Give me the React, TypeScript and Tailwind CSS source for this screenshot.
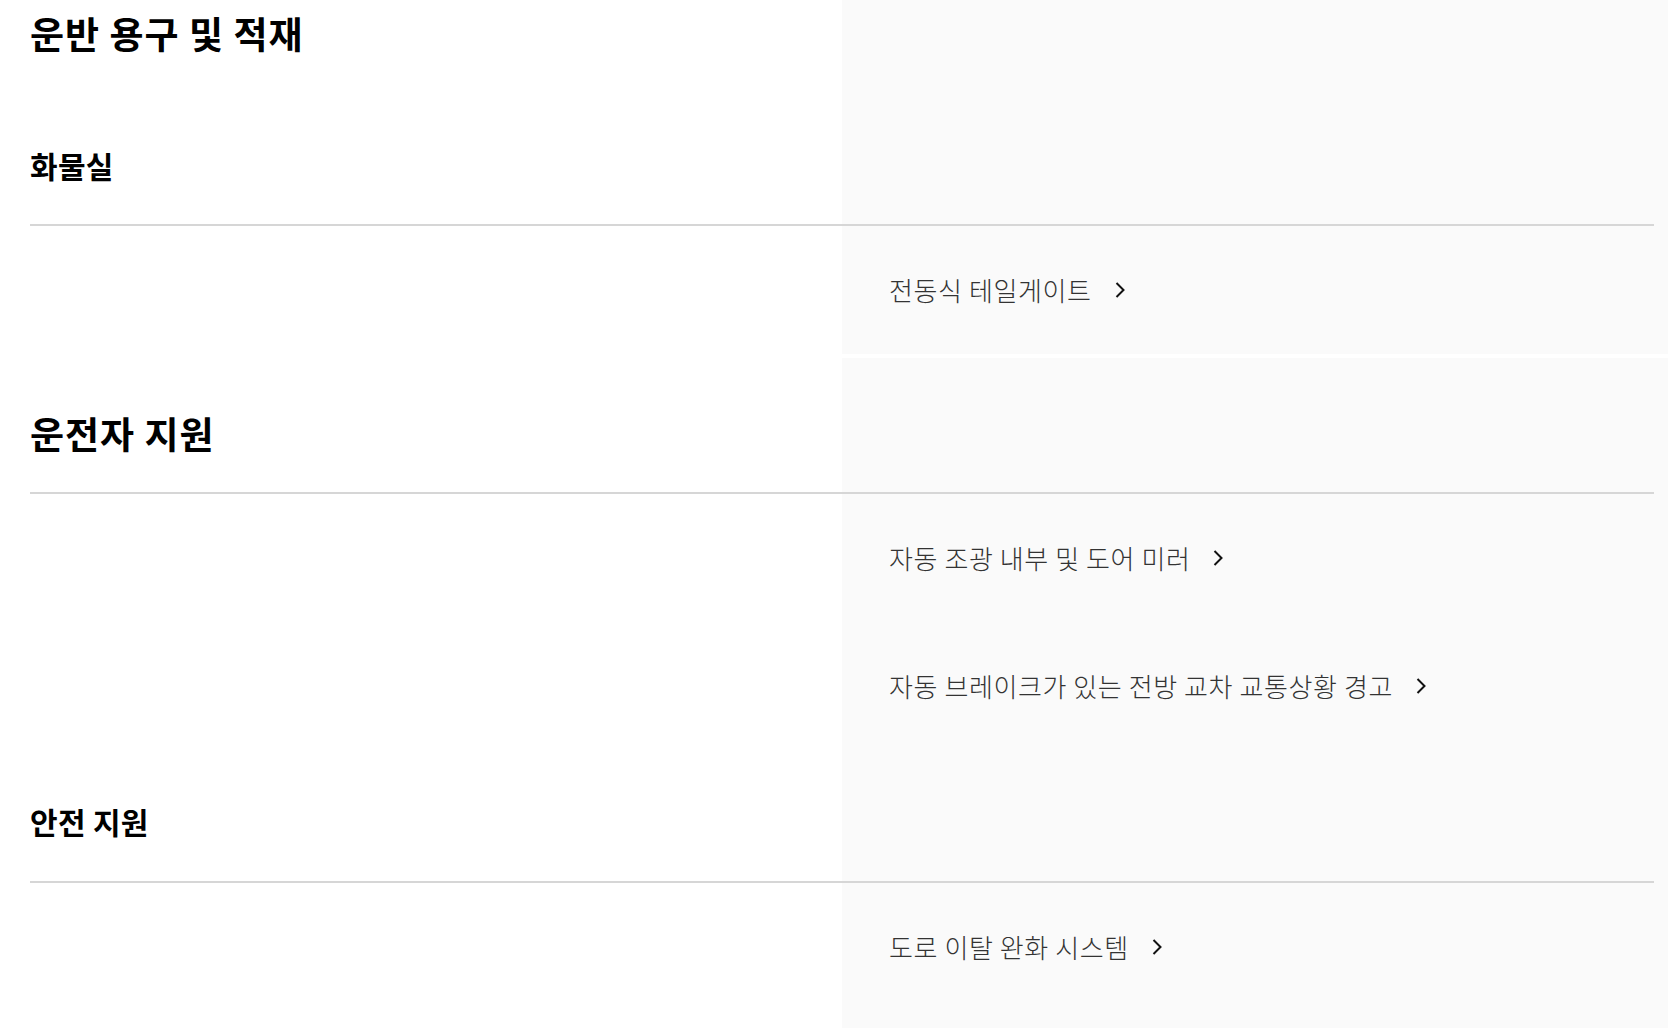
import React from "react";

type Group = {
  label?: string;
  items: string[];
};

type Section = {
  title: string;
  groups: Group[];
};

const sections: Section[] = [
  {
    title: "운반 용구 및 적재",
    groups: [{ label: "화물실", items: ["전동식 테일게이트"] }],
  },
  {
    title: "운전자 지원",
    groups: [
      {
        items: [
          "자동 조광 내부 및 도어 미러",
          "자동 브레이크가 있는 전방 교차 교통상황 경고",
        ],
      },
      { label: "안전 지원", items: ["도로 이탈 완화 시스템"] },
    ],
  },
];

const font = { fontFamily: '"Noto Sans CJK KR", "Noto Sans", sans-serif' };

const Chevron = () => (
  <svg width="15" height="18" viewBox="0 0 15 18" fill="none" className="ml-[21px] shrink-0">
    <polyline points="3.5,2 10.5,9 3.5,16" stroke="#111" strokeWidth="2" strokeLinecap="butt" strokeLinejoin="miter" />
  </svg>
);

const ItemRow = ({ text }: { text: string }) => (
  <div className="grid grid-cols-[812px_1fr] h-[128px]">
    <div />
    <div className="flex items-center pl-[47px]">
      <span className="text-[26px] leading-[36px] tracking-[0.6px] font-light text-[#333]">{text}</span>
      <Chevron />
    </div>
  </div>
);

const Divider = () => <div className="h-[2px] bg-[#d6d6d6]" />;

export default function App() {
  return (
    <div className="min-h-screen bg-white" style={font}>
      {sections.map((section, si) => (
        <div
          key={section.title}
          className={`bg-[linear-gradient(to_right,#ffffff_842px,#fafafa_842px)] pl-[30px] pr-[14px] ${
            si > 0 ? "mt-[4px] pb-[40px]" : ""
          }`}
        >
          <div className={section.groups[0].label ? "pt-[9px] pb-[35px]" : "pt-[51px] pb-[35px]"}>
            <h2 className="text-[37px] leading-[48px] tracking-[1px] font-bold text-black">{section.title}</h2>
          </div>
          {section.groups.map((group, gi) => (
            <div key={gi}>
              {group.label && (
                <div className={gi === 0 ? "pt-[53px] pb-[39px]" : "pt-[51px] pb-[40px]"}>
                  <h3 className="text-[30px] leading-[40px] tracking-[0.3px] font-bold text-black">{group.label}</h3>
                </div>
              )}
              <Divider />
              {group.items.map((item) => (
                <ItemRow key={item} text={item} />
              ))}
            </div>
          ))}
        </div>
      ))}
    </div>
  );
}
